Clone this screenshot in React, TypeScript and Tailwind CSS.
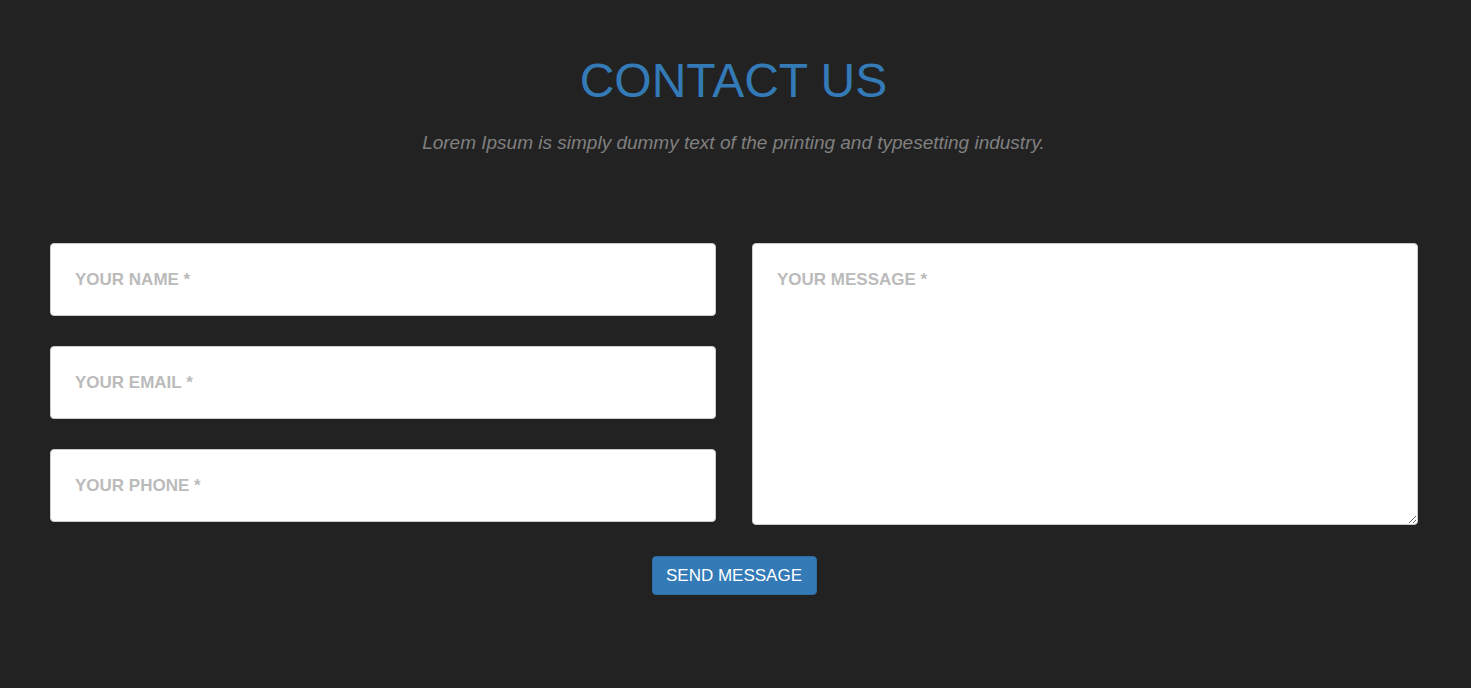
import React from "react";

export default function App() {
  const inputCls =
    "block w-full h-[73px] bg-white border border-[#cccccc] rounded-[4px] px-[24px] text-[17px] font-bold text-[#555] placeholder:text-[#bbbbbb] placeholder:font-bold outline-none";
  return (
    <div
      className="w-full h-[688px] bg-[#222222] overflow-hidden"
      style={{ fontFamily: '"Liberation Sans", Arial, sans-serif' }}
    >
      <div className="pt-[53px] pr-[4px] text-center">
        <h2 className="text-[48px] leading-[56px] text-[#337ab7] font-normal">CONTACT US</h2>
        <p className="mt-[22px] text-[19px] leading-[24px] italic text-[#808080]">
          Lorem Ipsum is simply dummy text of the printing and typesetting industry.
        </p>
      </div>
      <div className="ml-[50px] w-[1368px] mt-[88px] flex gap-[36px]">
        <div className="w-[666px] flex flex-col gap-[30px]">
          <input className={inputCls} placeholder="YOUR NAME *" />
          <input className={inputCls} placeholder="YOUR EMAIL *" />
          <input className={inputCls} placeholder="YOUR PHONE *" />
        </div>
        <div className="w-[666px]">
          <textarea
            className="block w-full h-[282px] bg-white border border-[#cccccc] rounded-[4px] px-[24px] py-[23px] text-[17px] font-bold text-[#555] placeholder:text-[#bbbbbb] outline-none"
            placeholder="YOUR MESSAGE *"
          />
        </div>
      </div>
      <div className="mt-[31px] flex justify-center">
        <button className="ml-[-3px] w-[165px] h-[39px] bg-[#337ab7] text-white text-[17px] rounded-[4px] border border-[#2e6da4]">
          SEND MESSAGE
        </button>
      </div>
    </div>
  );
}
